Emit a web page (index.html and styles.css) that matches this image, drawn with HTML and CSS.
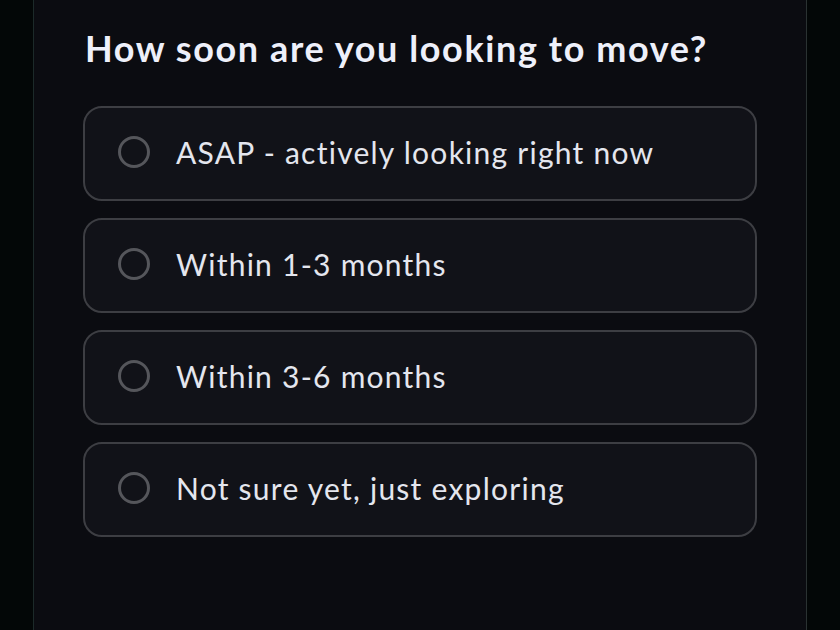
FILE: index.html
```html
<!DOCTYPE html>
<html lang="en">
<head>
    <meta charset="UTF-8">
    <meta name="viewport" content="width=device-width, initial-scale=1.0">
    <title>Move Timeline</title>
    <link rel="stylesheet" href="styles.css">
</head>
<body>

    <div class="panel">
        <h1 class="question">How soon are you looking to move?</h1>

        <div class="options">
            <label class="option">
                <span class="radio"></span>
                <span class="option-text">ASAP - actively looking right now</span>
            </label>
            <label class="option">
                <span class="radio"></span>
                <span class="option-text">Within 1-3 months</span>
            </label>
            <label class="option">
                <span class="radio"></span>
                <span class="option-text">Within 3-6 months</span>
            </label>
            <label class="option">
                <span class="radio"></span>
                <span class="option-text">Not sure yet, just exploring</span>
            </label>
        </div>
    </div>

</body>
</html>
```

FILE: styles.css
```css
body {
    font-family: Lato, "Noto Sans", sans-serif;
    background-color: #030707;
    margin: 0;
    padding: 0;
    height: 630px;
    overflow: hidden;
}

.panel {
    margin-left: 33px;
    width: 674px;
    height: 630px;
    padding: 26px 49px 0 49px;
    box-sizing: content-box;
    background-color: #0b0c11;
    border-left: 1px solid #1c2a29;
    border-right: 1px solid #2a3232;
}

.question {
    color: #eef0fa;
    font-size: 36px;
    font-weight: 700;
    letter-spacing: 1.6px;
    margin: 0 0 36px 2px;
    line-height: 44px;
}

.options {
    display: flex;
    flex-direction: column;
    gap: 17px;
}

.option {
    display: flex;
    align-items: center;
    height: 87px;
    padding: 0 34px 4px 33px;
    background-color: #111218;
    border: 2px solid #3d3e43;
    border-radius: 19px;
    cursor: pointer;
}

.radio {
    width: 26px;
    height: 26px;
    border: 3px solid #55565b;
    border-radius: 50%;
    flex-shrink: 0;
    margin-right: 26px;
}

.option-text {
    color: #e4e6ee;
    font-size: 30px;
    letter-spacing: 1.25px;
}
```
